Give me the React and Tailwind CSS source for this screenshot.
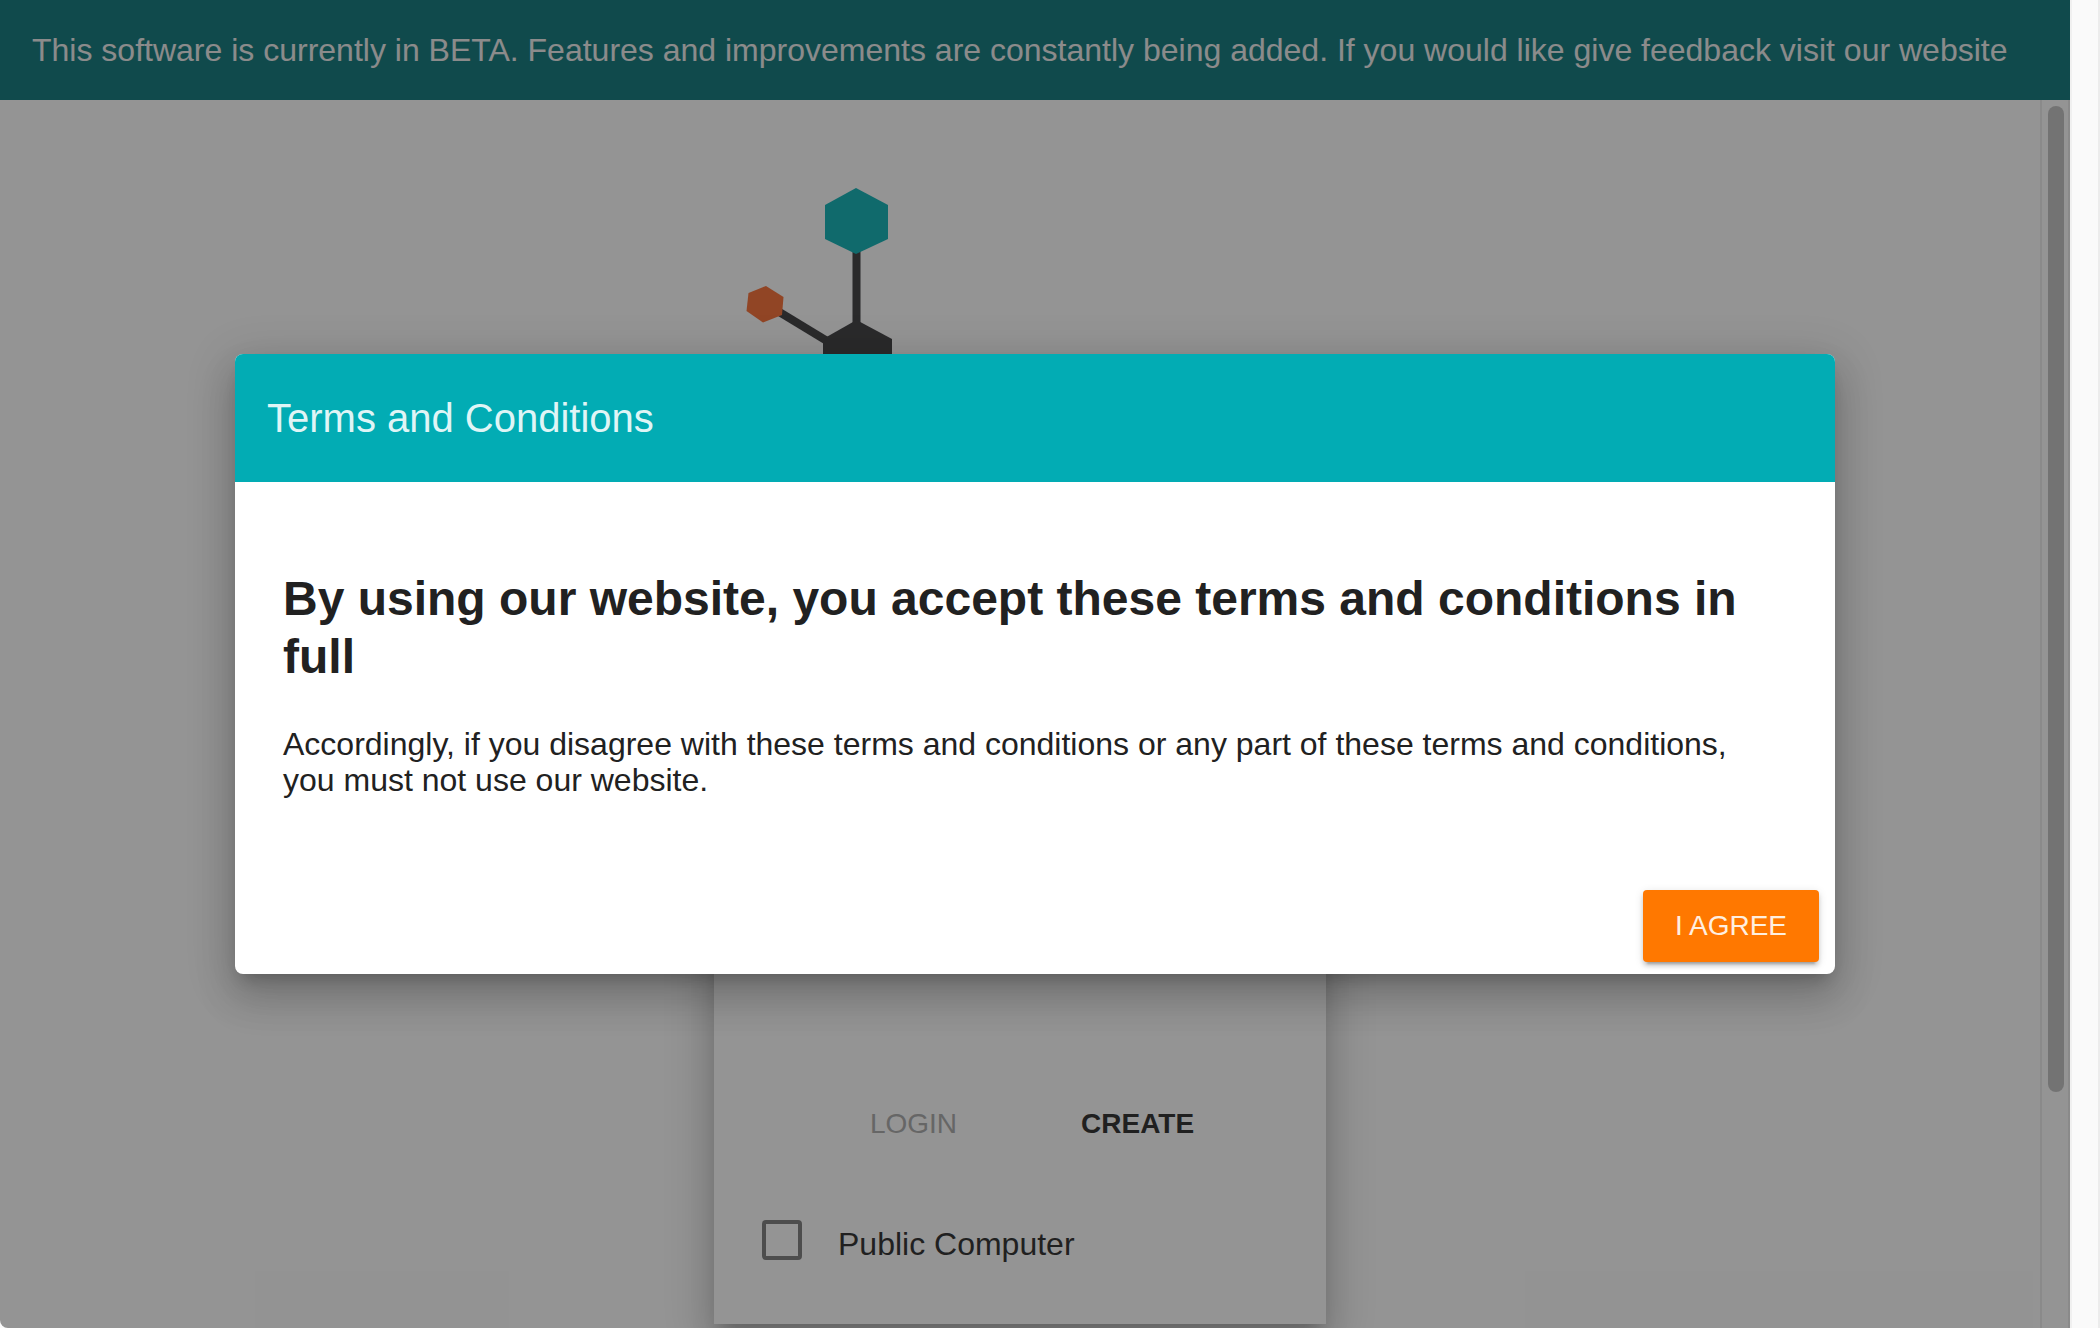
function Logo() {
  return (
    <svg viewBox="0 0 612 232" className="block w-full" role="img" aria-label="Logo">
      <g stroke="#323235" strokeWidth="8">
        <path d="M142.500 60V150" />
        <path d="M62 122L118 156" />
      </g>
      <path d="M142 0L174 17V51L142 66L111 51V17Z" fill="#02a8ac" />
      <path d="M52 98L69.500 109L68 127L49 134.500L32.500 123L34.500 105Z" fill="#f16429" />
      <path d="M142.500 132L178 151V192L143 212L109 192V151Z" fill="#323235" />
    </svg>
  );
}

function Banner() {
  return (
    <header className="flex h-[100px] shrink-0 items-center bg-[#036d71] px-8 text-[32px] leading-9 text-[#e5e5e5]">
      <p className="whitespace-nowrap">
        This software is currently in BETA. Features and improvements are constantly being added. If you would like give feedback visit our website
      </p>
    </header>
  );
}

function LoginCard() {
  return (
    <form className="flex flex-1 flex-col justify-end bg-[#f6f6f6] px-12 pb-14 text-[#212121] shadow-[0_14px_16px_-8px_rgba(0,0,0,0.2),0_24px_34px_4px_rgba(0,0,0,0.14),0_10px_44px_8px_rgba(0,0,0,0.12)]">
      <div className="mb-15 flex items-center justify-center gap-15 pl-6 text-[28px] leading-9">
        <button type="button" disabled className="h-18 px-8 text-[#a1a1a1]">
          LOGIN
        </button>
        <button type="button" className="h-18 px-8 font-bold">
          CREATE
        </button>
      </div>
      <label className="flex items-start gap-9 text-[32px] leading-12">
        <input
          type="checkbox"
          className="size-10 appearance-none rounded border-4 border-[#737373] checked:bg-[#737373]"
        />
        Public Computer
      </label>
    </form>
  );
}

function TermsDialog() {
  return (
    <section
      role="dialog"
      aria-modal="true"
      aria-labelledby="terms-title"
      className="w-full max-w-[1600px] overflow-hidden rounded-lg bg-white text-[#212121] shadow-[0_11px_15px_-7px_rgba(0,0,0,0.2),0_24px_38px_3px_rgba(0,0,0,0.14),0_9px_46px_8px_rgba(0,0,0,0.12)]"
    >
      <h1
        id="terms-title"
        className="flex h-32 items-center bg-[#02acb4] px-8 text-[40px] leading-16 text-[#dff5f6]"
      >
        Terms and Conditions
      </h1>
      <div className="px-12 pt-22 pb-23">
        <h2 className="text-[48px] leading-[58px] font-bold">
          By using our website, you accept these terms and conditions in full
        </h2>
        <p className="mt-10 text-[32px] leading-9">
          Accordingly, if you disagree with these terms and conditions or any part of these terms and conditions, you must not use our website.
        </p>
      </div>
      <div className="flex justify-end px-4 pb-3">
        <button
          type="button"
          className="h-18 rounded bg-[#ff7800] px-8 text-[28px] leading-9 font-medium text-[#ffefe0] shadow-[0_6px_2px_-4px_rgba(0,0,0,0.2),0_4px_4px_0_rgba(0,0,0,0.14),0_2px_10px_0_rgba(0,0,0,0.12)]"
        >
          I AGREE
        </button>
      </div>
    </section>
  );
}

export default function App() {
  return (
    <div className="flex h-screen overflow-hidden bg-[#fafafa] font-['Liberation_Sans',Arial,sans-serif]">
      <div className="relative flex min-w-0 flex-1 flex-col overflow-hidden rounded-bl-lg bg-[#f5f5f5]">
        <Banner />
        <div className="flex min-h-0 flex-1">
          <main className="flex min-w-0 flex-1 justify-center pt-22 pb-1">
            <div className="flex w-[612px] flex-col">
              <Logo />
              <LoginCard />
            </div>
          </main>
          <div className="w-[30px] border-x-2 border-[#e4e4e4] pt-1.5 pl-1.5">
            <div className="h-[986px] w-4 rounded-full bg-[#bababa]" />
          </div>
        </div>
        <div className="absolute inset-0 flex items-center justify-center bg-[#212121]/46">
          <TermsDialog />
        </div>
      </div>
      <div className="w-[30px] shrink-0 border-r-2 border-l-2 border-r-[#ececec] border-l-[#f0f0f0]" />
    </div>
  );
}
